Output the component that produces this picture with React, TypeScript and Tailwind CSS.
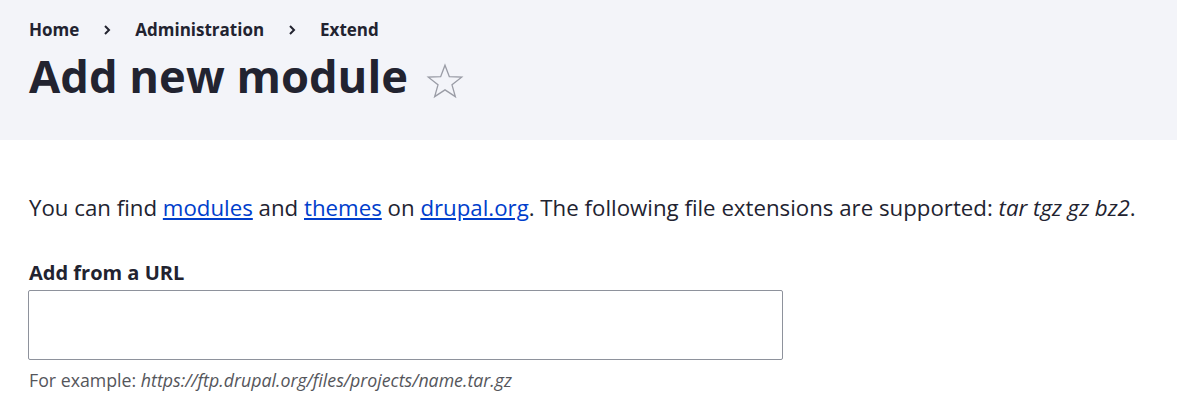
export default function App() {
  const crumbs = ['Home', 'Administration', 'Extend'];
  return (
    <div className="min-h-screen bg-white text-[#222330]" style={{ fontFamily: '"Open Sans", "Noto Sans", sans-serif' }}>
      <div className="h-[140px] bg-[#f3f4f9] px-[29px] pt-[18px]">
        <nav className="flex items-center text-[17px] font-bold leading-[24px]">
          {crumbs.map((c, i) => (
            <div key={c} className="flex items-center">
              {i > 0 && (
                <svg width="8" height="12" viewBox="0 0 8 12" className="mx-[24px]">
                  <path d="M2 2l4 4-4 4" fill="none" stroke="#222330" strokeWidth="2" />
                </svg>
              )}
              <span>{c}</span>
            </div>
          ))}
        </nav>
        <div className="mt-[6px] flex items-start">
          <h1 className="text-[45.3px] font-bold leading-[56px]">Add new module</h1>
          <svg width="40" height="40" viewBox="0 0 24 24" className="ml-[17px] mt-[13px]">
            <path
              d="M12 2.5l2.6 6.9 7.4.3-5.8 4.6 2 7.1L12 17.3l-6.2 4.1 2-7.1L2 9.7l7.4-.3z"
              fill="none"
              stroke="#9a9ca6"
              strokeWidth="0.8"
              strokeLinejoin="miter"
            />
          </svg>
        </div>
      </div>
      <div className="px-[29px] pt-[52px]">
        <p className="text-[22.25px] leading-[32px]">
          You can find{' '}
          <a href="#" className="text-[#003ecc] underline">modules</a> and{' '}
          <a href="#" className="text-[#003ecc] underline">themes</a> on{' '}
          <a href="#" className="text-[#003ecc] underline">drupal.org</a>. The following file extensions are supported:{' '}
          <em>tar tgz gz bz2</em>.
        </p>
        <label className="mt-[35px] block text-[20px] font-bold leading-[28px]">Add from a URL</label>
        <input type="text" className="ml-[-1px] mt-[3px] block h-[70px] w-[755px] rounded-[2px] border border-[#8e929c] bg-white" />
        <div className="mt-[8px] text-[17.75px] leading-[24px] text-[#55565b]">
          For example: <em>https://ftp.drupal.org/files/projects/name.tar.gz</em>
        </div>
      </div>
    </div>
  );
}
